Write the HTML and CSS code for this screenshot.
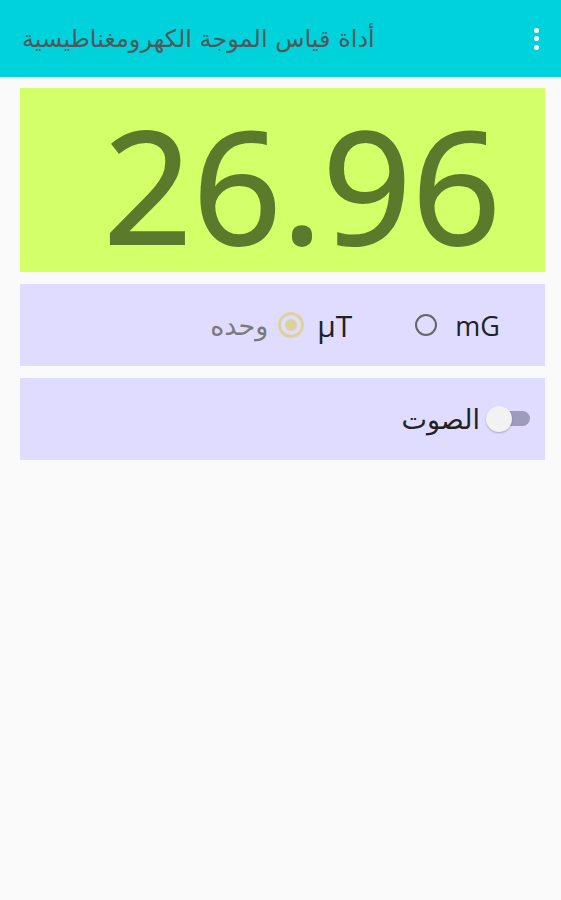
FILE: index.html
```html
<!DOCTYPE html>
<html lang="ar">

<head>
  <meta charset="UTF-8">
  <meta name="viewport" content="width=device-width, initial-scale=1.0">
  <title>أداة قياس الموجة الكهرومغناطيسية</title>
  <link rel="stylesheet" href="styles.css">
</head>

<body>
  <div class="toolbar">
    <h1 class="toolbar-title">أداة قياس الموجة الكهرومغناطيسية</h1>
    <div class="menu-dots" title="المزيد">
      <span></span><span></span><span></span>
    </div>
  </div>

  <div class="content">
    <div class="reading-card">
      <div class="reading">26.96</div>
    </div>

    <div class="option-card unit-row">
      <label class="radio">
        <span class="radio-circle"></span>
        <span class="radio-text">mG</span>
      </label>
      <label class="radio checked">
        <span class="radio-circle"></span>
        <span class="radio-text">µT</span>
      </label>
      <span class="unit-label">وحده</span>
    </div>

    <div class="option-card sound-row">
      <label class="switch">
        <span class="switch-track"></span>
        <span class="switch-thumb"></span>
      </label>
      <span class="sound-label">الصوت</span>
    </div>
  </div>
</body>

</html>
```

FILE: styles.css
```css
body {
  font-family: 'Open Sans', Roboto, 'Noto Sans', sans-serif;
  margin: 0;
  background-color: #fafafa;
}

.toolbar {
  height: 77px;
  background-color: #00d2dc;
  display: flex;
  align-items: center;
  justify-content: space-between;
  padding: 0 18px 0 22px;
  box-sizing: border-box;
}

.toolbar-title {
  margin: 0;
  font-family: 'DejaVu Sans', 'Noto Sans', sans-serif;
  font-size: 24px;
  font-weight: normal;
  color: #4d5a5c;
  direction: rtl;
}

.menu-dots {
  display: flex;
  flex-direction: column;
  gap: 3.5px;
  padding: 0 4px;
}

.menu-dots span {
  width: 5px;
  height: 5px;
  border-radius: 50%;
  background-color: white;
}

.content {
  padding: 11px 16px 0 20px;
  display: flex;
  flex-direction: column;
  gap: 12px;
}

.reading-card {
  height: 184px;
  background-color: #d3ff69;
  display: flex;
  align-items: center;
  justify-content: flex-end;
  padding-right: 44px;
}

.reading {
  font-family: 'Open Sans', sans-serif;
  font-size: 156px;
  line-height: 1;
  color: #5c7a2c;
  margin-top: 8px;
  -webkit-text-stroke: 2px #5c7a2c;
}

.option-card {
  height: 82px;
  background-color: #e0dcff;
  display: flex;
  flex-direction: row-reverse;
  align-items: center;
}

.unit-row {
  padding-right: 45px;
}

.radio {
  display: flex;
  align-items: center;
  gap: 18px;
  margin-left: 63px;
}

.radio.checked {
  gap: 13px;
  margin-left: 10px;
}

.radio-circle {
  width: 18px;
  height: 18px;
  border: 2px solid #666;
  border-radius: 50%;
  display: flex;
  align-items: center;
  justify-content: center;
}

.radio.checked .radio-circle {
  width: 20px;
  height: 20px;
  border: 3px solid #ddd39a;
}

.radio.checked .radio-circle:before {
  content: "";
  width: 12px;
  height: 12px;
  border-radius: 50%;
  background-color: #ddd39a;
}

.radio-text {
  font-size: 27px;
  color: #222;
}

.radio.checked .radio-text {
  font-size: 30px;
}

.unit-label {
  font-family: 'DejaVu Sans', 'Noto Sans', sans-serif;
  font-size: 27px;
  color: #7a7a7a;
  direction: rtl;
}

.sound-row {
  padding-right: 15px;
}

.switch {
  position: relative;
  width: 44px;
  height: 26px;
  margin-left: 6px;
}

.switch-track {
  position: absolute;
  left: 8px;
  right: 0;
  top: 5px;
  height: 15px;
  border-radius: 8px;
  background-color: #9d9cbc;
}

.switch-thumb {
  position: absolute;
  left: 0;
  top: 0;
  width: 26px;
  height: 26px;
  border-radius: 50%;
  background-color: #f2f2f2;
  box-shadow: 0 1px 2px rgba(0, 0, 0, 0.25);
}

.sound-label {
  font-family: 'DejaVu Sans', 'Noto Sans', sans-serif;
  font-size: 27px;
  color: #222;
  direction: rtl;
}
```
